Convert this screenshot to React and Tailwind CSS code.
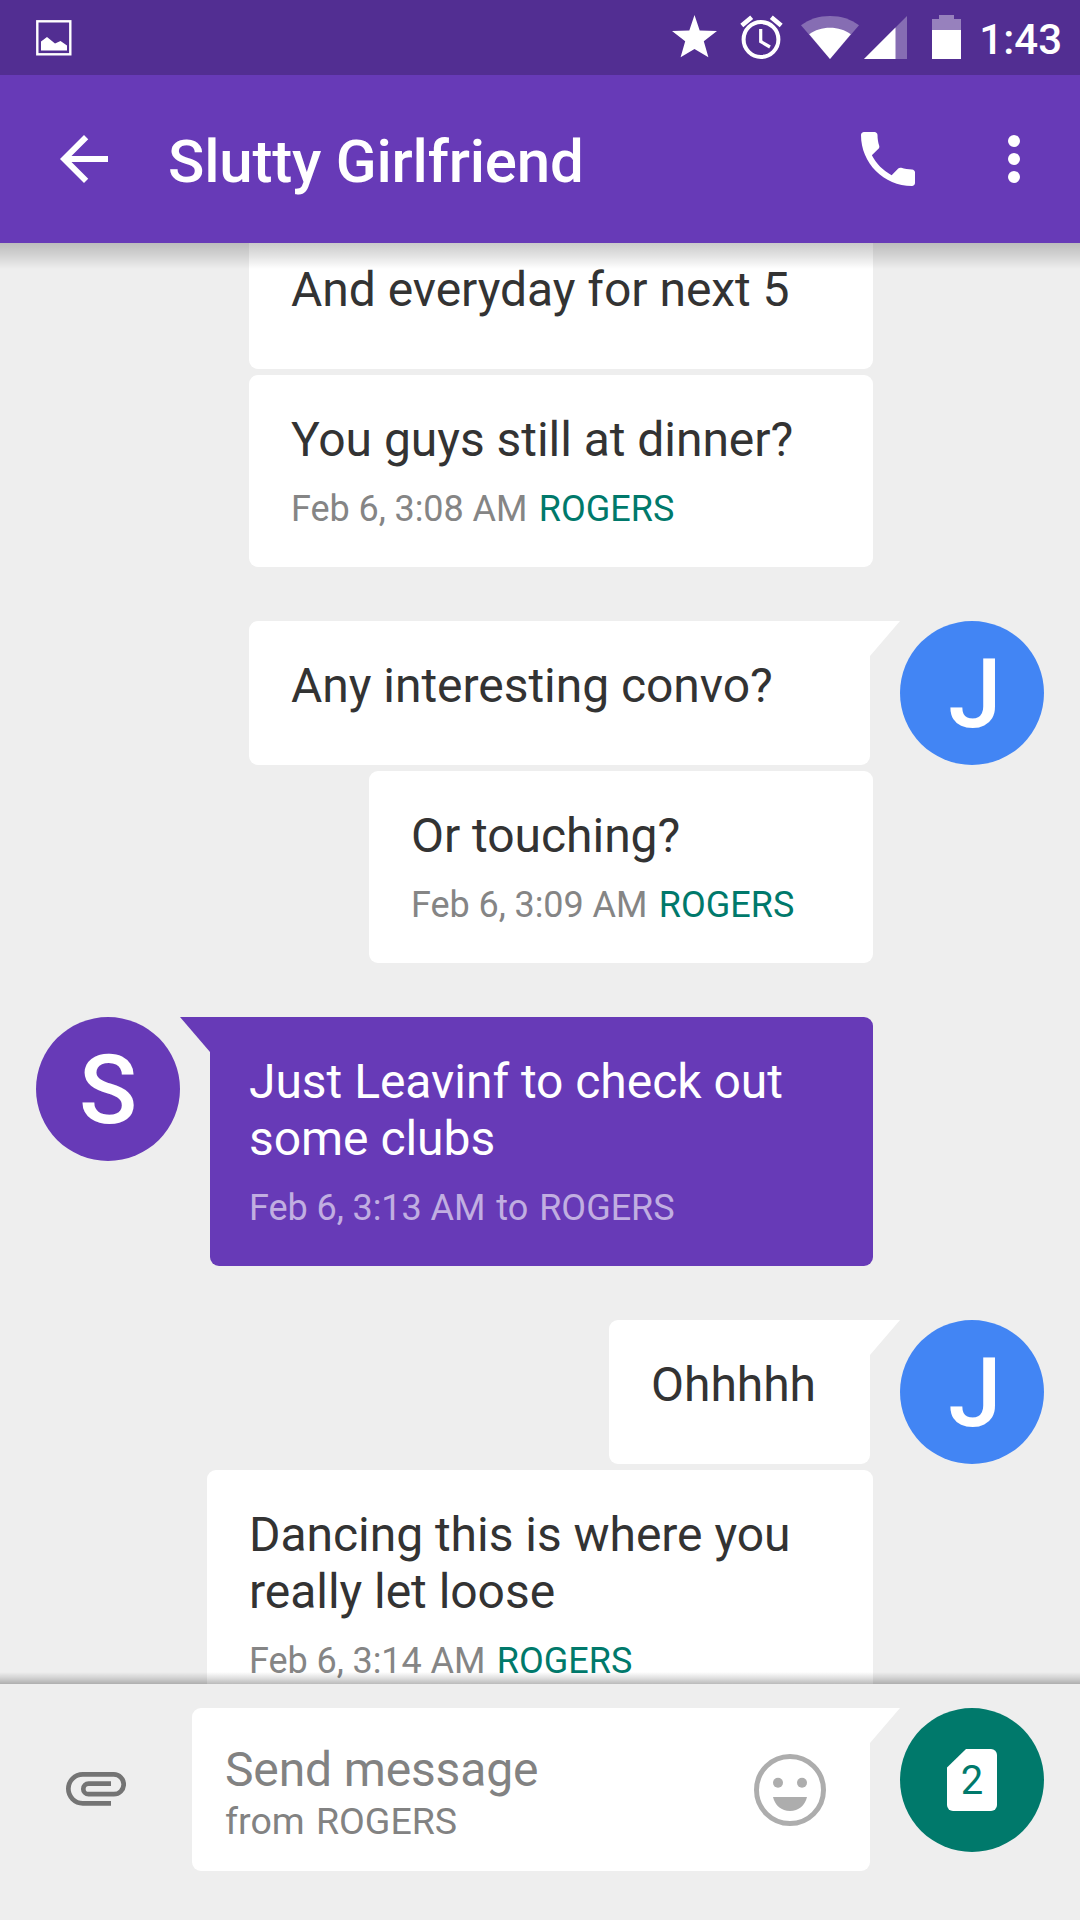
import clsx from "clsx";

const messages = [
  { text: "And everyday for next 5", width: "w-[624px]" },
  { text: "You guys still at dinner?", time: "Feb 6, 3:08 AM", width: "w-[624px]", gap: "mt-1.5" },
  { text: "Any interesting convo?", avatar: "J", width: "w-[621px]", gap: "mt-[54px]" },
  { text: "Or touching?", time: "Feb 6, 3:09 AM", width: "w-[504px]", gap: "mt-1.5" },
  { text: "Just Leavinf to check out some clubs", time: "Feb 6, 3:13 AM", avatar: "S", incoming: true, width: "w-[663px]", gap: "mt-[54px]" },
  { text: "Ohhhhh", avatar: "J", width: "w-[261px]", gap: "mt-[54px]" },
  { text: "Dancing this is where you really let loose", time: "Feb 6, 3:14 AM", width: "w-[666px]", gap: "mt-1.5" },
];

function StatusBar() {
  return (
    <div className="h-[75px] shrink-0 bg-[#522e92] flex items-start justify-between pl-9 pr-[18px] text-white">
      <svg className="mt-5 w-9 h-9" viewBox="0 0 36 36" fill="currentColor">
        <rect x="1.3" y="1.3" width="33" height="33" fill="none" stroke="currentColor" strokeWidth="2.4" />
        <path d="M5 30.5V21.5L11 17L19 23.5L24.5 21L31 25.5V30.5Z" />
      </svg>

      <div className="flex items-start">
        {/* Star */}
        <svg className="mt-[15px] w-[45px] h-[43px]" viewBox="0 0 45 43" fill="currentColor">
          <path d="M22.5 0L27.7 15.4L45 16L31.8 26.3L36.4 42.3L22.5 34L8.6 42.3L13.2 26.3L0 16L17.3 15.4Z" />
        </svg>
        {/* Alarm */}
        <svg className="mt-[15px] ml-[23px] w-[43px] h-[45px]" viewBox="0 0 43 45" fill="none" stroke="currentColor">
          <circle cx="21" cy="24.5" r="17.4" strokeWidth="4" />
          <path d="M20.7 14V26.5L30 32" strokeWidth="3.2" />
          <path d="M1.8 10.5L11.7 2.2M31.3 2.2L41.2 10.5" strokeWidth="4.6" />
        </svg>
        {/* Wifi */}
        <svg className="mt-4 ml-[18px] w-[58px] h-[43px]" viewBox="0 0 58 43" fill="currentColor">
          <path d="M29 43L0 9.3C8 3.2 18 0 29 0S50 3.2 58 9.3Z" opacity="0.3" />
          <path d="M29 43L8.2 18.3C14 14 21 11.7 29 11.7S44 14 49.8 18.3Z" />
        </svg>
        {/* Signal */}
        <svg className="mt-4 ml-[5px] w-[43px] h-[43px]" viewBox="0 0 43 43" fill="currentColor">
          <path d="M0 43L43 0V43Z" opacity="0.3" />
          <path d="M0 43L31.5 11.5V43Z" />
        </svg>
        {/* Battery */}
        <svg className="mt-[15px] ml-[25px] w-[29px] h-11" viewBox="0 0 29 44" fill="currentColor">
          <path d="M0 15V4H7V0H22V4H29V15Z" opacity="0.4" />
          <path d="M0 15H29V44H0Z" />
        </svg>
        <span className="mt-[15px] ml-[18px] text-[42px] leading-[50px] font-medium">1:43</span>
      </div>
    </div>
  );
}

function AppBar() {
  return (
    <header className="h-[168px] shrink-0 bg-[#673ab7] flex items-center pl-12 pr-[30px] text-white">
      <svg className="w-[72px] h-[72px]" viewBox="0 0 24 24" fill="currentColor">
        <path d="M20 11H7.83l5.59-5.59L12 4l-8 8 8 8 1.41-1.41L7.83 13H20v-2z" />
      </svg>
      <h1 className="ml-12 mt-1.5 text-[60px] leading-[70px] tracking-[-0.2px] font-medium flex-1 whitespace-nowrap">
        Slutty Girlfriend
      </h1>
      <svg className="w-[72px] h-[72px]" viewBox="0 0 24 24" fill="currentColor">
        <path d="M6.62 10.79c1.44 2.83 3.76 5.14 6.59 6.59l2.2-2.2c.27-.27.67-.36 1.02-.24 1.12.37 2.33.57 3.57.57.55 0 1 .45 1 1V20c0 .55-.45 1-1 1-9.39 0-17-7.61-17-17 0-.55.45-1 1-1h3.5c.55 0 1 .45 1 1 0 1.25.2 2.45.57 3.57.11.35.03.74-.25 1.02l-2.2 2.2z" />
      </svg>
      <svg className="ml-[54px] w-[72px] h-[72px]" viewBox="0 0 24 24" fill="currentColor">
        <circle cx="12" cy="6" r="2" />
        <circle cx="12" cy="12" r="2" />
        <circle cx="12" cy="18" r="2" />
      </svg>
    </header>
  );
}

function Avatar({ letter }) {
  return (
    <div
      className={clsx(
        "w-36 h-36 shrink-0 rounded-full text-center text-white text-[96px] leading-[147px] font-medium",
        letter === "S" ? "bg-[#673ab7]" : "bg-[#4285f4] pl-1.5"
      )}
    >
      {letter}
    </div>
  );
}

function Tail({ left }) {
  return (
    <div
      className={clsx(
        "w-[30px] h-[35px] shrink-0",
        left
          ? "bg-[#673ab7] [clip-path:polygon(0_0,100%_0,100%_100%)]"
          : "bg-white [clip-path:polygon(0_0,100%_0,0_100%)]"
      )}
    />
  );
}

function Message({ text, time, avatar, incoming, width, gap }) {
  return (
    <div
      className={clsx(
        "flex items-start shrink-0",
        gap,
        incoming ? "pl-9" : "justify-end",
        !incoming && (avatar ? "pr-9" : "pr-[207px]")
      )}
    >
      {incoming && <Avatar letter={avatar} />}
      {incoming && <Tail left />}
      <div
        className={clsx(
          "rounded-[9px] pt-9",
          width,
          time ? "pb-[37px]" : "pb-[51px]",
          incoming ? "bg-[#673ab7] text-white pl-[39px] rounded-tl-none" : "bg-white text-[#333] pl-[42px]",
          avatar && !incoming ? "rounded-tr-none" : "pr-[75px]"
        )}
      >
        <p className="text-[48px] leading-[57px] tracking-[-0.04px]">{text}</p>
        {time && (
          <p
            className={clsx(
              "mt-5 flex text-[36px] leading-[42px] whitespace-nowrap",
              incoming ? "gap-[11px] text-white/60" : "gap-[11.5px] text-[#858585]"
            )}
          >
            <span className="tracking-[-0.07px]">{time}</span>
            {incoming ? (
              <span className="[word-spacing:2px]">to ROGERS</span>
            ) : (
              <span className="text-[#00796b]">ROGERS</span>
            )}
          </p>
        )}
      </div>
      {avatar && !incoming && <Tail />}
      {avatar && !incoming && <Avatar letter={avatar} />}
    </div>
  );
}

function Composer() {
  return (
    <footer className="h-[236px] shrink-0 bg-[#eee] flex items-start pt-6 pl-[66px] pr-9">
      <svg className="mt-16 w-[60px] h-[34px] text-[#747474]" viewBox="0 0 60 34" fill="none" stroke="currentColor" strokeWidth="4.7">
        <path d="M45 31.3H16.8A14.4 14.4 0 0 1 16.8 2.4H47.8A9.9 9.9 0 0 1 47.8 22.2H22.6A5.3 5.3 0 0 1 22.6 11.6H45" />
      </svg>

      <div className="ml-[66px] w-[678px] h-[163px] bg-white rounded-[9px] rounded-tr-none flex justify-between pl-[33px] pr-11 text-[#828282]">
        <div className="pt-[33px]">
          <p className="text-[48px] leading-[57px] tracking-[-0.15px]">Send message</p>
          <p className="mt-0.5 text-[37.5px] leading-[42px] [word-spacing:2px]">from ROGERS</p>
        </div>
        <svg className="mt-[46px] w-[72px] h-[72px] text-[#adadad]" viewBox="0 0 72 72" fill="currentColor">
          <circle cx="36" cy="36" r="33.5" fill="none" stroke="currentColor" strokeWidth="5" />
          <circle cx="24" cy="28.7" r="5" />
          <circle cx="48" cy="28.7" r="5" />
          <path d="M19 43H53C51 51.5 44.5 57 36 57S21 51.5 19 43Z" />
        </svg>
      </div>
      <Tail />

      <div className="w-36 h-36 rounded-full bg-[#00796b] flex items-center justify-center">
        <div className="relative w-[50px] h-[62px]">
          <svg className="w-full h-full text-white" viewBox="0 0 50 62" fill="currentColor">
            <path d="M19 0H44A6 6 0 0 1 50 6V56A6 6 0 0 1 44 62H6A6 6 0 0 1 0 56V18.5Z" />
          </svg>
          <span className="absolute inset-0 text-center text-[40px] leading-[64px] text-[#00796b]">2</span>
        </div>
      </div>
    </footer>
  );
}

export default function App() {
  return (
    <div className="w-[1080px] h-[1920px] overflow-hidden flex flex-col bg-[#eee] font-['Roboto',sans-serif]">
      <StatusBar />
      <AppBar />
      <main className="relative flex-1 min-h-0 overflow-hidden">
        <div className="flex flex-col -mt-[18px]">
          {messages.map((m) => (
            <Message key={m.text} {...m} />
          ))}
        </div>
        {/* Edge shadows from the bars above and below */}
        <div className="absolute top-0 inset-x-0 h-[26px] bg-linear-to-b from-black/21 via-black/11 to-transparent" />
        <div className="absolute bottom-0 inset-x-0 h-3 bg-linear-to-t from-black/27 via-black/12 to-transparent" />
      </main>
      <Composer />
    </div>
  );
}
